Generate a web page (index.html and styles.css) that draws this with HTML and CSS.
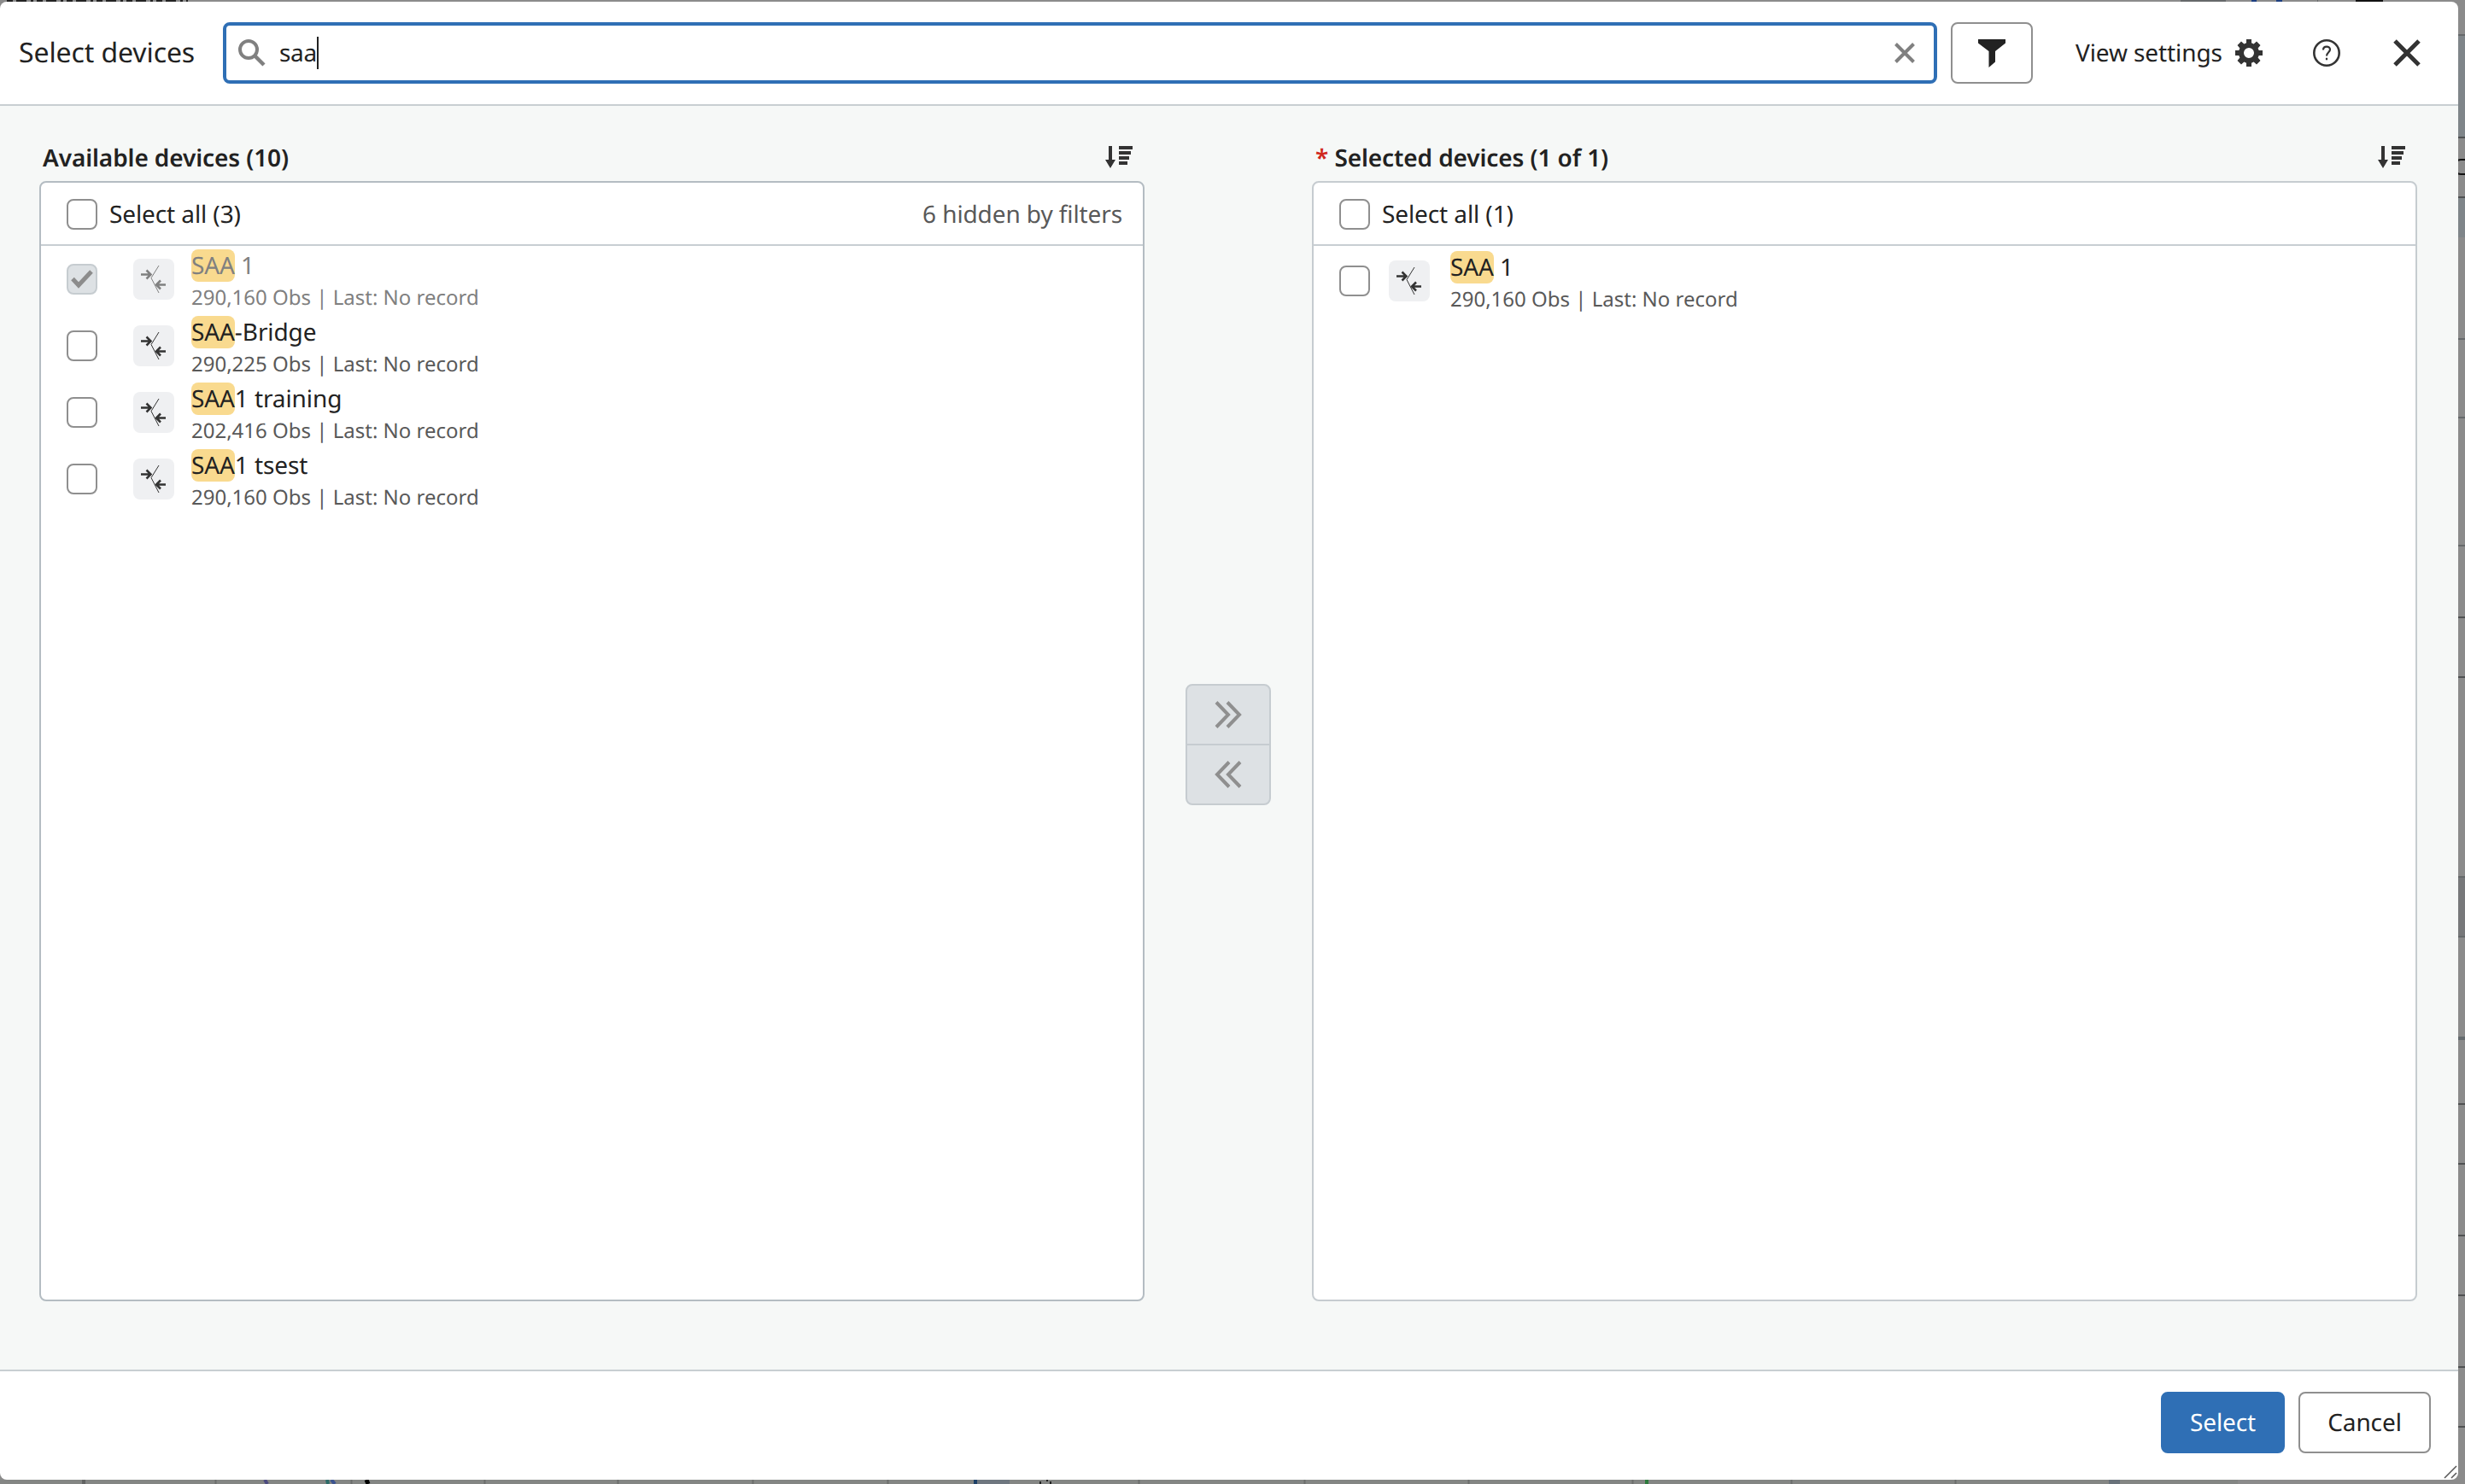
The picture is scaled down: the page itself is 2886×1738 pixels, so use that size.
FILE: index.html
```html
<!DOCTYPE html>
<html lang="en">
<head>
    <meta charset="UTF-8" />
    <meta name="viewport" content="width=device-width, initial-scale=1.0" />
    <title>Select devices</title>
    <link rel="stylesheet" href="styles.css">
</head>
<body>
  <!-- page showing behind the dialog -->
  <svg class="backdrop" width="2886" height="1738" viewBox="0 0 2886 1738">
    <path d="M8 1h212" stroke="#222" stroke-width="2" stroke-dasharray="7 4 12 5 3 4" />
    <g fill="#7f8589">
      <rect x="2878" y="42" width="8" height="119" />
      <rect x="2878" y="231" width="8" height="47" />
    </g>
    <rect x="2878" y="1026" width="8" height="72" fill="#77787a" />
    <rect x="2878" y="1214" width="8" height="4" fill="#646a6e" />
    <g fill="#4f5152">
      <rect x="2878" y="160" width="8" height="2" />
      <rect x="2878" y="230" width="8" height="2" />
      <rect x="2878" y="722" width="8" height="2" />
      <rect x="2878" y="792" width="8" height="2" />
      <rect x="2878" y="1292" width="8" height="2" />
      <rect x="2878" y="1362" width="8" height="2" />
      <rect x="2878" y="1446" width="8" height="2" />
      <rect x="2878" y="1516" width="8" height="2" />
      <rect x="2878" y="1600" width="8" height="2" />
      <rect x="2878" y="1670" width="8" height="2" />
    </g>
    <g fill="#66696b">
      <rect x="2878" y="40" width="8" height="2" />
      <rect x="2878" y="396" width="8" height="2" />
      <rect x="2878" y="488" width="8" height="2" />
      <rect x="2878" y="638" width="8" height="2" />
      <rect x="2878" y="1026" width="8" height="2" />
      <rect x="2878" y="1096" width="8" height="2" />
      <rect x="2553" y="0" width="53" height="2" />
      <rect x="2713" y="0" width="1" height="2" />
    </g>
    <path d="M2886 187h-5q-3 0-5 2M2886 204h-5q-3 0-5-2" fill="none" stroke="#111" stroke-width="2" />
    <path d="M2636 1h6M2665 1h7" stroke="#1d3f80" stroke-width="2" />
    <path d="M2758 1h32" stroke="#111" stroke-width="2" />

    <!-- chart grid under the bottom edge -->
    <rect x="0" y="1733" width="2620" height="5" fill="#848684" />
    <path d="M252.500 1733v5M411.500 1733v5M567.500 1733v5M723.500 1733v5M881.500 1733v5M1039.500 1733v5M1333.500 1733v5M1527.500 1733v5M1719.500 1733v5M1911.500 1733v5M2097.500 1733v5M2289.500 1733v5" stroke="#6c6e6d" stroke-width="2" />
    <rect x="96" y="1733" width="4" height="5" fill="#626463" />
    <path d="M310 1733l3 5" stroke="#4c4a80" stroke-width="4" />
    <path d="M383 1733l1 5" stroke="#2b6b68" stroke-width="4" />
    <path d="M388 1733l4 5" stroke="#3b5390" stroke-width="4" />
    <path d="M429 1733l2 5" stroke="#000" stroke-width="5" />
    <rect x="1144" y="1733" width="38" height="5" fill="#6f7780" />
    <rect x="1140" y="1733" width="4" height="5" fill="#1d4068" />
    <path d="M1218 1735v3M1226 1733v2M1230 1735v3" stroke="#222" stroke-width="2" />
    <rect x="1926" y="1733" width="4" height="5" fill="#2c7a3c" />
    <rect x="2469" y="1733" width="13" height="5" fill="#69727a" />
  </svg>

  <svg class="sprite" width="0" height="0">
    <symbol id="sort" viewBox="0 0 32 27">
      <path d="M4 0h4v16h4L6 26 0 16h4zM16 0h16v4H16zM16 6h14v4H16zM16 12h12v4H16zM16 18h10v4H16z" fill="#333" />
    </symbol>
    <symbol id="bridge" viewBox="0 0 32 34">
      <path d="M22 1 13 15.500 22 33" fill="none" stroke="currentColor" stroke-width="1" />
      <path d="M1 11.500h11M7.500 6.500l5 5-5 5M30 23.500H19M24 18.500l-5 5 5 5" fill="none" stroke="currentColor" stroke-width="2.500" />
    </symbol>
  </svg>

  <div class="dialog">
    <header>
      <h1>Select devices</h1>
      <div class="search">
        <svg class="search-icon" width="32" height="34" viewBox="0 0 32 34">
          <circle cx="12" cy="13" r="10" fill="none" stroke="#808080" stroke-width="4" />
          <path d="M19 20 30 31" stroke="#808080" stroke-width="4.500" />
        </svg>
        <span class="query">saa</span>
        <svg class="clear" width="24" height="24" viewBox="0 0 24 24">
          <path d="M1.500 1.500l21 21M22.500 1.500l-21 21" stroke="#808080" stroke-width="4" />
        </svg>
      </div>
      <button class="btn filter">
        <svg width="32" height="33" viewBox="0 0 32 33">
          <path d="M0 0h32v4.500L20 14v12.500L12.500 33V14L0 4.500z" fill="#222" />
        </svg>
      </button>
      <a class="settings">View settings
        <svg width="32" height="32" viewBox="0 0 32 32">
          <path fill="#333" fill-rule="evenodd" d="M13 0h6v4.300l2.600 1.100L25 2.500 29.500 7l-2.900 3.400L27.700 13H32v6h-4.300l-1.100 2.600 2.900 3.400L25 29.500l-3.400-2.900L19 27.700V32h-6v-4.300l-2.600-1.100L7 29.500 2.500 25l2.900-3.400L4.300 19H0v-6h4.300l1.100-2.600L2.500 7 7 2.500l3.400 2.900L13 4.300zM16 10a6 6 0 1 0 0 12 6 6 0 0 0 0-12z" />
        </svg>
      </a>
      <svg class="help" width="32" height="32" viewBox="0 0 32 32">
        <circle cx="16" cy="16" r="14.700" fill="none" stroke="#333" stroke-width="2.600" />
        <path d="M12 12.500c0-5 8-5 8-.5 0 3-4 3.500-4 7.500M16 21.800v2.400" fill="none" stroke="#333" stroke-width="2.200" />
      </svg>
      <svg class="close" width="32" height="32" viewBox="0 0 32 32">
        <path d="M2 2l28 28M30 2 2 30" stroke="#333" stroke-width="5" />
      </svg>
    </header>

    <main>
      <section class="column">
        <div class="column-title">
          <h2>Available devices (10)</h2>
          <svg class="sort" width="32" height="27"><use href="#sort" /></svg>
        </div>
        <div class="list available">
          <div class="select-all">
            <span class="checkbox"></span>
            <span>Select all (3)</span>
            <span class="hidden-count">6 hidden by filters</span>
          </div>
          <div class="device disabled">
            <span class="checkbox checked">
              <svg width="26" height="24" viewBox="0 0 26 24"><path d="M2 11.500 9 19 24 3" fill="none" stroke="#8c8c8c" stroke-width="5" /></svg>
            </span>
            <span class="tile"><svg width="32" height="34"><use href="#bridge" /></svg></span>
            <div class="info">
              <div class="name"><mark>SAA</mark> 1</div>
              <div class="meta">290,160 Obs | Last: No record</div>
            </div>
          </div>
          <div class="device">
            <span class="checkbox"></span>
            <span class="tile"><svg width="32" height="34"><use href="#bridge" /></svg></span>
            <div class="info">
              <div class="name"><mark>SAA</mark>-Bridge</div>
              <div class="meta">290,225 Obs | Last: No record</div>
            </div>
          </div>
          <div class="device">
            <span class="checkbox"></span>
            <span class="tile"><svg width="32" height="34"><use href="#bridge" /></svg></span>
            <div class="info">
              <div class="name"><mark>SAA</mark>1 training</div>
              <div class="meta">202,416 Obs | Last: No record</div>
            </div>
          </div>
          <div class="device">
            <span class="checkbox"></span>
            <span class="tile"><svg width="32" height="34"><use href="#bridge" /></svg></span>
            <div class="info">
              <div class="name"><mark>SAA</mark>1 tsest</div>
              <div class="meta">290,160 Obs | Last: No record</div>
            </div>
          </div>
        </div>
      </section>

      <div class="move">
        <button>
          <svg width="32" height="32" viewBox="0 0 32 32"><path d="M2 1.500 16 16 2 30.500M15 1.500 29 16 15 30.500" fill="none" stroke="#8f8f8f" stroke-width="4" /></svg>
        </button>
        <button>
          <svg width="32" height="32" viewBox="0 0 32 32"><path d="M17 1.500 3 16 17 30.500M30 1.500 16 16 30 30.500" fill="none" stroke="#8f8f8f" stroke-width="4" /></svg>
        </button>
      </div>

      <section class="column">
        <div class="column-title">
          <h2><span class="required">*</span> Selected devices (1 of 1)</h2>
          <svg class="sort" width="32" height="27"><use href="#sort" /></svg>
        </div>
        <div class="list selected">
          <div class="select-all">
            <span class="checkbox"></span>
            <span>Select all (1)</span>
          </div>
          <div class="device">
            <span class="checkbox"></span>
            <span class="tile"><svg width="32" height="34"><use href="#bridge" /></svg></span>
            <div class="info">
              <div class="name"><mark>SAA</mark> 1</div>
              <div class="meta">290,160 Obs | Last: No record</div>
            </div>
          </div>
        </div>
      </section>
    </main>

    <footer>
      <button class="btn primary">Select</button>
      <button class="btn cancel">Cancel</button>
    </footer>
    <svg class="resize" width="16" height="16" viewBox="0 0 16 16">
      <path d="M1 15 15 1M9 15l6-6" stroke="#555" stroke-width="1.500" />
    </svg>
  </div>
</body>
</html>
```
FILE: styles.css
```css
* {
    margin: 0;
    padding: 0;
    box-sizing: border-box;
}

body {
    position: relative;
    width: 2886px;
    height: 1738px;
    overflow: hidden;
    padding-top: 2px;
    background: #8b8b8b;
    font-family: 'Noto Sans', sans-serif;
    font-size: 28px;
    line-height: 38px;
    letter-spacing: -0.1px;
    text-rendering: geometricPrecision;
    color: #222;
}

svg {
    display: block;
    flex: none;
}

button {
    font: inherit;
    color: inherit;
    letter-spacing: inherit;
    text-rendering: inherit;
}

.sprite {
    position: absolute;
}

.backdrop {
    position: absolute;
    top: 0;
    left: 0;
}

.dialog {
    position: relative;
    width: 2878px;
    height: 1731px;
    display: flex;
    flex-direction: column;
    background: #fff;
    border-radius: 8px;
    overflow: hidden;
}

header {
    display: flex;
    align-items: center;
    height: 122px;
    padding: 0 44px 0 22px;
    border-bottom: 2px solid #c8ced2;
}

h1 {
    width: 239px;
    font-size: 32px;
    font-weight: 400;
    white-space: nowrap;
}

.search {
    display: flex;
    align-items: center;
    width: 2007px;
    height: 72px;
    padding: 0 22px 0 14px;
    border: 4px solid #2f6fb5;
    border-radius: 8px;
}

.query {
    margin-left: 16px;
    margin-right: auto;
    border-right: 2px solid #222;
    letter-spacing: -0.3px;
}

.btn {
    display: flex;
    align-items: center;
    justify-content: center;
    height: 72px;
    background: #fff;
    border: 2px solid #8f8f8f;
    border-radius: 8px;
}

.filter {
    width: 96px;
    margin-left: 16px;
}

.settings {
    display: flex;
    align-items: center;
    gap: 15px;
    margin-left: 50px;
    white-space: nowrap;
}

.help {
    margin-left: auto;
    margin-right: 62px;
}

main {
    flex: 1;
    display: flex;
    padding: 41px 48px 0 46px;
    background: #f6f8f7;
}

.column {
    width: 1294px;
}

.column-title {
    display: flex;
    align-items: center;
    justify-content: space-between;
    height: 47px;
    padding: 0 14px 8px 4px;
}

h2 {
    font-size: 28px;
    font-weight: 600;
}

.required {
    color: #d0271d;
}

.list {
    height: 1312px;
    background: #fff;
    border: 2px solid #b4bcc2;
    border-radius: 8px;
}

    .list.selected {
        border-color: #c6ccd0;
    }

.select-all {
    display: flex;
    align-items: center;
    gap: 14px;
    height: 74px;
    padding: 2px 24px 0 30px;
    border-bottom: 2px solid #c8ced2;
}

.hidden-count {
    margin-left: auto;
    color: #595959;
}

.checkbox {
    flex: none;
    display: flex;
    align-items: center;
    justify-content: center;
    width: 36px;
    height: 36px;
    background: #fff;
    border: 2px solid #8f8f8f;
    border-radius: 8px;
}

    .checkbox.checked {
        background: #dde1e4;
        border-color: #c6ccd0;
    }

.device {
    display: flex;
    align-items: center;
    height: 78px;
    padding-left: 30px;
}

.selected .device {
    margin-top: 2px;
}

.tile {
    display: flex;
    align-items: center;
    justify-content: center;
    width: 48px;
    height: 48px;
    margin: 0 20px 0 42px;
    background: #eff0f2;
    border-radius: 8px;
    color: #333;
}

.selected .tile {
    margin-left: 22px;
    margin-right: 24px;
}

.info {
    padding-top: 4px;
}

.name {
    height: 40px;
}

mark {
    background: #f9da8f;
    color: inherit;
    border-radius: 8px;
}

.meta {
    height: 34px;
    font-size: 24px;
    line-height: 34px;
    letter-spacing: 0;
    color: #595959;
}

.disabled .tile,
.disabled .name,
.disabled .meta {
    color: #808080;
}

.move {
    width: 100px;
    height: 142px;
    margin: 636px 48px 0;
    background: #dde1e4;
    border: 2px solid #c6ccd0;
    border-radius: 8px;
}

    .move button {
        display: flex;
        align-items: center;
        justify-content: center;
        width: 100%;
        height: 68px;
        background: none;
        border: none;
    }

    .move button + button {
        height: 70px;
        border-top: 2px solid #c6ccd0;
    }

footer {
    display: flex;
    justify-content: flex-end;
    gap: 16px;
    height: 129px;
    padding: 24px 32px 0;
    border-top: 2px solid #c8ced2;
}

.primary {
    width: 145px;
    background: #2f6fb5;
    border-color: #2f6fb5;
    color: #fff;
}

.cancel {
    width: 155px;
}

.resize {
    position: absolute;
    right: 1px;
    bottom: 1px;
}
```
